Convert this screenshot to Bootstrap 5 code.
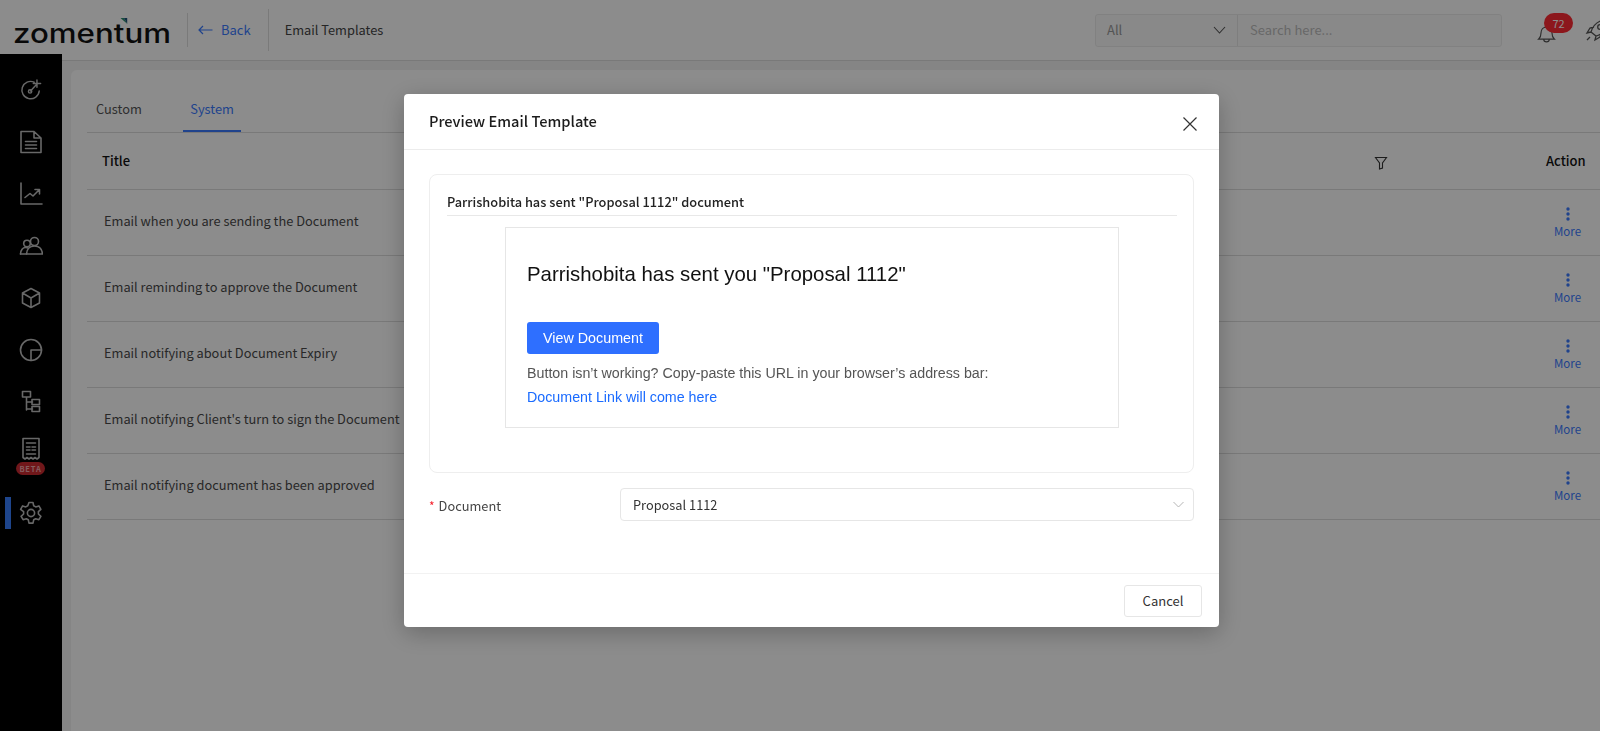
<!DOCTYPE html>
<html lang="en">
<head>
<meta charset="UTF-8">
<title>Email Templates</title>
<link href="https://cdn.jsdelivr.net/npm/bootstrap@5.3.0/dist/css/bootstrap.min.css" rel="stylesheet">
<style>
html, body { height: 100%; overflow: hidden; }
body { font-family: "Noto Sans CJK SC", "Noto Sans", sans-serif; font-size: 12.8px; color: #4a4a4a; background: #f3f3f3; }
.top-bar { height: 61px; background: #fff; border-bottom: 1px solid #dcdcdc; padding-left: 13px; }
.logo-box { width: 158px; height: 40px; flex: none; }
.logo-word { font-family: "Inter", sans-serif; font-weight: 550; font-size: 26.5px; color: #111; line-height: 40px; position: relative; display: inline-block; transform: scaleX(1.18); transform-origin: left center; margin-top: 3px; }
.logo-mark { position: absolute; left: 91px; top: 5px; }
.top-sep { width: 1px; background: #dedede; }
.sep-a { height: 34px; margin-left: 16px; }
.sep-b { height: 42px; margin-left: 17px; }
.back-link { color: #3b7bff; margin-left: 10px; gap: 8px; font-size: 13px; }
.crumb-title { margin-left: 16px; color: #444; }
.search-group { width: 407px; height: 33px; margin-left: auto; border: 1px solid #ececec; border-radius: 3px; background: #fafafa; }
.search-kind { width: 142px; border-right: 1px solid #e6e6e6; padding: 0 11px; color: #999; font-size: 13px; }
.search-text { padding-left: 12px; color: #bdbdbd; font-size: 13px; }
.notify-wrap { width: 40px; height: 40px; margin-left: 35px; position: relative; }
.notify-badge { position: absolute; left: 7px; top: 3px; width: 29px; height: 20px; line-height: 20px; border-radius: 10px; padding: 0; background: #ff2a33; color: #fff; font-size: 11px; font-weight: 400; }
.rocket-wrap { margin-left: 7px; margin-right: -8px; width: 24px; flex: none; }
.page-row { height: calc(100% - 61px); }
.side-rail { width: 62px; flex: none; background: #000; margin-top: -7px; position: relative; padding-top: 10px; }
.rail-item { height: 52px; width: 62px; }
.rail-item svg { stroke: #bdbdbd; fill: none; stroke-width: 1.6; stroke-linecap: round; stroke-linejoin: round; }
.rail-tall { height: 59px; padding-top: 9px; }
.beta-tag { position: absolute; left: 16px; top: 34px; width: 29px; height: 13px; line-height: 13px; border-radius: 7px; background: #cc2a31; color: #f2a9ac; font-size: 7.5px; font-weight: 700; letter-spacing: .8px; text-align: center; }
.rail-active { position: absolute; left: 5px; top: 10px; width: 6px; height: 32px; background: #377fff; }
.sheet { margin: 9px 0 0 9px; width: 1529px; background: #fff; flex: none; padding: 0 0 0 16px; border-radius: 6px 0 0 0; }
.tab-row { height: 62px; gap: 32px; }
.tab-item { padding: 0 9px; height: 62px; line-height: 78px; color: #555; }
.tab-on { color: #3b7bff; border-bottom: 2px solid #3b7bff; padding: 0 7.5px; }
.template-table { margin: 0; border-top: 1px solid #dcdcdc; }
.template-table th, .template-table td { border-bottom: 1px solid #dcdcdc; padding: 0; vertical-align: middle; color: inherit; background: transparent; box-shadow: none; }
.template-table th { height: 57px; font-weight: 500; font-size: 13px; color: #111; }
.template-table td { height: 66px; font-size: 12.8px; color: #4a4a4a; }
.title-head { padding-left: 15px !important; }
.title-cell { padding: 0 0 3px 17px !important; }
.filter-cell { width: 40px; }
.action-cell { width: 186px; }
.action-head { padding-left: 132px !important; }
.more-stack { margin-left: 134px; width: 39px; text-align: center; color: #3b7bff; font-size: 11.5px; line-height: 14px; }
.more-dots { display: block; margin: 0 auto 3px; }
.modal-backdrop.show { opacity: .45; }
.preview-dialog { width: 815px; max-width: none; margin: 94px 0 0 404px; }
.preview-dialog .modal-content { border: 0; border-radius: 4px; height: 533px; box-shadow: 0 6px 24px rgba(0,0,0,.25); }
.preview-dialog .modal-header { height: 56px; padding: 0 25px; border-bottom: 1px solid #ececec; }
.preview-dialog .modal-title { font-size: 14.65px; font-weight: 500; color: #1c1c1c; margin-top: -1px; }
.close-x { background: none; border: 0; padding: 0; margin-right: -3px; margin-top: 4px; line-height: 0; }
.preview-dialog .modal-body { padding: 24px 25px 0; flex: none; height: 423px; }
.mail-frame { height: 299px; border: 1px solid #eeeeee; border-radius: 8px; padding: 17px 16px 0 17px; }
.mail-subject { font-size: 12.8px; font-weight: 500; color: #222; border-bottom: 1px solid #e8e8e8; height: 24px; line-height: 20px; }
.mail-box { width: 614px; height: 201px; margin: 11px auto 0; border: 1px solid #e6e6e6; padding: 0 21px; font-family: "Liberation Sans", Arial, sans-serif; }
.mail-heading { font-size: 20.4px; font-weight: 400; color: #111; margin: 0; padding-top: 34px; line-height: 24px; }
.view-btn { background: #2e6fff; color: #fff; border: 0; border-radius: 3px; width: 132px; height: 32px; padding: 1px 0 0; font-size: 14.3px; margin-top: 36px; display: block; }
.mail-hint { font-size: 14.25px; color: #555; margin: 9px 0 0; line-height: 20px; }
.mail-link { font-size: 14.25px; color: #1a6bff; text-decoration: none; display: block; margin-top: 4px; line-height: 20px; }
.doc-row { margin-top: 15px; }
.doc-label { width: 191px; color: #444; flex: none; margin-top: 2px; }
.doc-star { color: #f5222d; margin-right: 4px; font-size: 12px; }
.doc-select { flex: 1; height: 33px; border: 1px solid #e6e6e6; border-radius: 4px; padding: 0 9px 0 12px; color: #333; }
.preview-dialog .modal-footer { flex: none; height: 54px; padding: 0 17px 0 0; border-top: 1px solid #f2f2f2; }
.cancel-btn { margin: 0; width: 78px; height: 32px; padding: 0; background: #fff; border: 1px solid #e6e6e6; border-radius: 3px; font-size: 13px; color: #333; }
</style>
</head>
<body>

<div class="top-bar d-flex align-items-center">
    <div class="logo-box">
        <div class="logo-word">zomentum
            <svg class="logo-mark" width="6" height="6" viewBox="0 0 6 6"><path d="M0 0h3l3 6z" fill="#2c8f6f"/><path d="M3 0h3v6z" fill="#1d4f7a"/></svg>
        </div>
    </div>
    <div class="top-sep sep-a"></div>
    <a class="back-link d-flex align-items-center text-decoration-none">
        <svg width="15" height="10" viewBox="0 0 15 10" fill="none" stroke="#3b7bff" stroke-width="1.2"><path d="M14.500 5H1M5 1 1 5l4 4"/></svg>
        <span>Back</span>
    </a>
    <div class="top-sep sep-b"></div>
    <div class="crumb-title">Email Templates</div>
    <div class="search-group d-flex">
        <div class="search-kind d-flex align-items-center justify-content-between">
            <span>All</span>
            <svg width="13" height="8" viewBox="0 0 13 8" fill="none" stroke="#555" stroke-width="1.1"><path d="m1 1 5.500 6L12 1"/></svg>
        </div>
        <div class="search-text d-flex align-items-center flex-fill">Search here...</div>
    </div>
    <div class="notify-wrap d-flex align-items-center">
        <svg width="19" height="22" viewBox="0 0 20 24" fill="none" stroke="#555" stroke-width="1.3" class="mt-2"><path d="M1.500 17.500c1.800-1.500 2.500-3.500 2.500-6.500 0-4 2.500-6.500 6-6.500s6 2.500 6 6.500c0 3 .7 5 2.500 6.500zM7 18c0 3.500 6 3.500 6 0"/></svg>
        <span class="badge notify-badge">72</span>
    </div>
    <div class="rocket-wrap">
        <svg width="26" height="26" viewBox="0 0 26 26" fill="none" stroke="#555" stroke-width="1.3"><path d="M7 15C9 8 15 3 24 2c0 9-5 15-12 17zM7 15l-4 1 3-5 4-1M12 19l-1 4 5-3 1-4M6 20l-3 3"/><circle cx="16" cy="10" r="2.300"/></svg>
    </div>
</div>

<div class="page-row d-flex">
    <nav class="side-rail">
        <div class="rail-item d-flex align-items-center justify-content-center">
            <svg width="22" height="22" viewBox="0 0 24 24"><path d="M15.500 3.500A9.500 9.500 0 1 0 21 13M11.500 13l6-6.500M18.500 1v8M14.500 5h8"/><circle cx="11" cy="13.500" r="1.800"/></svg>
        </div>
        <div class="rail-item d-flex align-items-center justify-content-center">
            <svg width="24" height="24" viewBox="0 0 24 24"><path d="M2 1.500h13l7 6.500v14.500H2zM15 1.500V8h7M6.500 11.500h11M6.500 15h11M6.500 18.500h11"/></svg>
        </div>
        <div class="rail-item d-flex align-items-center justify-content-center">
            <svg width="24" height="24" viewBox="0 0 24 24"><path d="M2 1v21h21M6 15.500l5-4 3 2.500 6-6M16 7.500h4.500V12"/></svg>
        </div>
        <div class="rail-item d-flex align-items-center justify-content-center">
            <svg width="24" height="24" viewBox="0 0 24 24"><circle cx="8" cy="9.500" r="3.300"/><circle cx="15.500" cy="7.500" r="4"/><path d="M1.500 20c0-4 2.500-6.500 5-6.500 2 0 3 1 3 1M7.500 20c.3-5 3.500-8 8-8s7.500 3 8 8z"/><path d="M1.500 20h6"/></svg>
        </div>
        <div class="rail-item d-flex align-items-center justify-content-center">
            <svg width="22" height="22" viewBox="0 0 22 22"><path d="M11 1.500 19.500 6v10L11 20.500 2.500 16V6zM2.500 6 11 11l8.500-5M11 11v9.500"/></svg>
        </div>
        <div class="rail-item d-flex align-items-center justify-content-center">
            <svg width="24" height="24" viewBox="0 0 24 24"><circle cx="12" cy="12" r="10.500"/><path d="M22.500 12H12v10.500"/></svg>
        </div>
        <div class="rail-item d-flex align-items-center justify-content-center">
            <svg width="20" height="24" viewBox="0 0 20 24"><path d="M1.500 1.500h8v5.500h-8zM5.500 7v13M5.500 12h6M5.500 19h6M11 9.500h7.500v5H11zM11 16.500h7.500v5H11z"/></svg>
        </div>
        <div class="rail-item rail-tall position-relative d-flex justify-content-center">
            <svg width="20" height="24" viewBox="0 0 20 24"><path d="M2 1.500h16v19l-2 1.500-2-1.500-2 1.500-2-1.500-2 1.500-2-1.500-2 1.500-2-1.500zM5.500 6h9M5.500 10h3.500M11 10h3.500M5.500 13h3.500M11 13h3.500M5.500 17h9"/></svg>
            <span class="beta-tag">BETA</span>
        </div>
        <div class="rail-item position-relative d-flex align-items-center justify-content-center">
            <div class="rail-active"></div>
            <svg width="24" height="24" viewBox="0 0 24 24"><circle cx="12" cy="12" r="3.600"/><path d="M10 1.500h4l.7 3.300 2 1.100 3.200-1 2 3.400-2.500 2.300v2.400l2.500 2.300-2 3.400-3.200-1-2 1.100-.7 3.300h-4l-.7-3.300-2-1.100-3.200 1-2-3.400 2.500-2.300v-2.400L1.600 8.300l2-3.400 3.200 1 2-1.100z"/></svg>
        </div>
    </nav>

    <main class="sheet">
        <div class="tab-row d-flex">
            <div class="tab-item">Custom</div>
            <div class="tab-item tab-on">System</div>
        </div>
        <table class="table template-table">
            <thead>
                <tr>
                    <th class="title-head">Title</th>
                    <th class="filter-cell">
                        <svg width="14" height="14" viewBox="0 0 14 14" fill="none" stroke="#333" stroke-width="1.100"><path d="M1.500 1.500h11L8.500 7v5l-3 1V7z"/></svg>
                    </th>
                    <th class="action-cell action-head">Action</th>
                </tr>
            </thead>
            <tbody id="template-rows"></tbody>
        </table>
    </main>
</div>

<div class="modal-backdrop show"></div>
<div class="modal d-block">
    <div class="modal-dialog preview-dialog">
        <div class="modal-content">
            <div class="modal-header">
                <h5 class="modal-title">Preview Email Template</h5>
                <button class="close-x ms-auto">
                    <svg width="14" height="14" viewBox="0 0 14 14" fill="none" stroke="#333" stroke-width="1.200"><path d="m.5.5 13 13M13.500.5l-13 13"/></svg>
                </button>
            </div>
            <div class="modal-body">
                <div class="mail-frame">
                    <div class="mail-subject">Parrishobita has sent "Proposal 1112" document</div>
                    <div class="mail-box">
                        <h2 class="mail-heading">Parrishobita has sent you "Proposal 1112"</h2>
                        <button class="view-btn">View Document</button>
                        <p class="mail-hint">Button isn’t working? Copy-paste this URL in your browser’s address bar:</p>
                        <a class="mail-link" href="#">Document Link will come here</a>
                    </div>
                </div>
                <div class="doc-row d-flex align-items-center">
                    <label class="doc-label"><span class="doc-star">*</span>Document</label>
                    <div class="doc-select d-flex align-items-center justify-content-between">
                        <span>Proposal 1112</span>
                        <svg width="11" height="7" viewBox="0 0 11 7" fill="none" stroke="#b5b5b5" stroke-width="1"><path d="m.5 1 5 5 5-5"/></svg>
                    </div>
                </div>
            </div>
            <div class="modal-footer">
                <button class="cancel-btn">Cancel</button>
            </div>
        </div>
    </div>
</div>

<script src="https://cdn.jsdelivr.net/npm/bootstrap@5.3.0/dist/js/bootstrap.bundle.min.js"></script>
<script>
const templates = [
    'Email when you are sending the Document',
    'Email reminding to approve the Document',
    'Email notifying about Document Expiry',
    "Email notifying Client's turn to sign the Document",
    'Email notifying document has been approved'
];
document.getElementById('template-rows').innerHTML = templates.map(name => `
    <tr>
        <td class="title-cell" colspan="2">${name}</td>
        <td class="action-cell">
            <div class="more-stack">
                <svg class="more-dots" width="4" height="14" viewBox="0 0 4 14" fill="#3b7bff"><circle cx="2" cy="2" r="1.700"/><circle cx="2" cy="7" r="1.700"/><circle cx="2" cy="12" r="1.700"/></svg>
                More
            </div>
        </td>
    </tr>`).join('');
</script>
</body>
</html>
